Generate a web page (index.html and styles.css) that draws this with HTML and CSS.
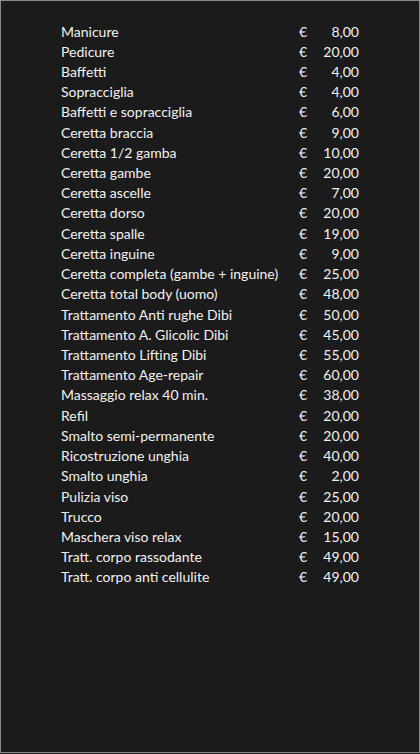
FILE: index.html
```html
<!DOCTYPE html>
<html lang="it">
<head>
<meta charset="utf-8">
<title>Listino prezzi</title>
<link rel="stylesheet" href="styles.css">
</head>
<body>
<div class="page">
  <div class="list">
    <span class="name">Manicure</span><span class="cur">€</span><span class="price">8,00</span>
    <span class="name">Pedicure</span><span class="cur">€</span><span class="price">20,00</span>
    <span class="name">Baffetti</span><span class="cur">€</span><span class="price">4,00</span>
    <span class="name">Sopracciglia</span><span class="cur">€</span><span class="price">4,00</span>
    <span class="name">Baffetti e sopracciglia</span><span class="cur">€</span><span class="price">6,00</span>
    <span class="name">Ceretta braccia</span><span class="cur">€</span><span class="price">9,00</span>
    <span class="name">Ceretta 1/2 gamba</span><span class="cur">€</span><span class="price">10,00</span>
    <span class="name">Ceretta gambe</span><span class="cur">€</span><span class="price">20,00</span>
    <span class="name">Ceretta ascelle</span><span class="cur">€</span><span class="price">7,00</span>
    <span class="name">Ceretta dorso</span><span class="cur">€</span><span class="price">20,00</span>
    <span class="name">Ceretta spalle</span><span class="cur">€</span><span class="price">19,00</span>
    <span class="name">Ceretta inguine</span><span class="cur">€</span><span class="price">9,00</span>
    <span class="name">Ceretta completa (gambe + inguine)</span><span class="cur">€</span><span class="price">25,00</span>
    <span class="name">Ceretta total body (uomo)</span><span class="cur">€</span><span class="price">48,00</span>
    <span class="name">Trattamento Anti rughe Dibi</span><span class="cur">€</span><span class="price">50,00</span>
    <span class="name">Trattamento A. Glicolic Dibi</span><span class="cur">€</span><span class="price">45,00</span>
    <span class="name">Trattamento Lifting Dibi</span><span class="cur">€</span><span class="price">55,00</span>
    <span class="name">Trattamento Age-repair</span><span class="cur">€</span><span class="price">60,00</span>
    <span class="name">Massaggio relax 40 min.</span><span class="cur">€</span><span class="price">38,00</span>
    <span class="name">Refil</span><span class="cur">€</span><span class="price">20,00</span>
    <span class="name">Smalto semi-permanente</span><span class="cur">€</span><span class="price">20,00</span>
    <span class="name">Ricostruzione unghia</span><span class="cur">€</span><span class="price">40,00</span>
    <span class="name">Smalto unghia</span><span class="cur">€</span><span class="price">2,00</span>
    <span class="name">Pulizia viso</span><span class="cur">€</span><span class="price">25,00</span>
    <span class="name">Trucco</span><span class="cur">€</span><span class="price">20,00</span>
    <span class="name">Maschera viso relax</span><span class="cur">€</span><span class="price">15,00</span>
    <span class="name">Tratt. corpo rassodante</span><span class="cur">€</span><span class="price">49,00</span>
    <span class="name">Tratt. corpo anti cellulite</span><span class="cur">€</span><span class="price">49,00</span>
  </div>
</div>
</body>
</html>
```

FILE: styles.css
```css
html, body {
  margin: 0;
  padding: 0;
  background: #1b1b1b;
}

.page {
  box-sizing: border-box;
  width: 420px;
  height: 753px;
  border: 1px solid #8a8a8a;
  background: #1b1b1b;
  padding: 20.5px 0 0 60px;
  font-family: Lato, "Open Sans", sans-serif;
  font-size: 14px;
  color: #f2f2f2;
}

.list {
  display: grid;
  grid-template-columns: 238px 10px 50px;
  line-height: 20.22px;
}

.name {
  white-space: nowrap;
}

.cur {
  text-align: left;
}

.price {
  text-align: right;
}
```
